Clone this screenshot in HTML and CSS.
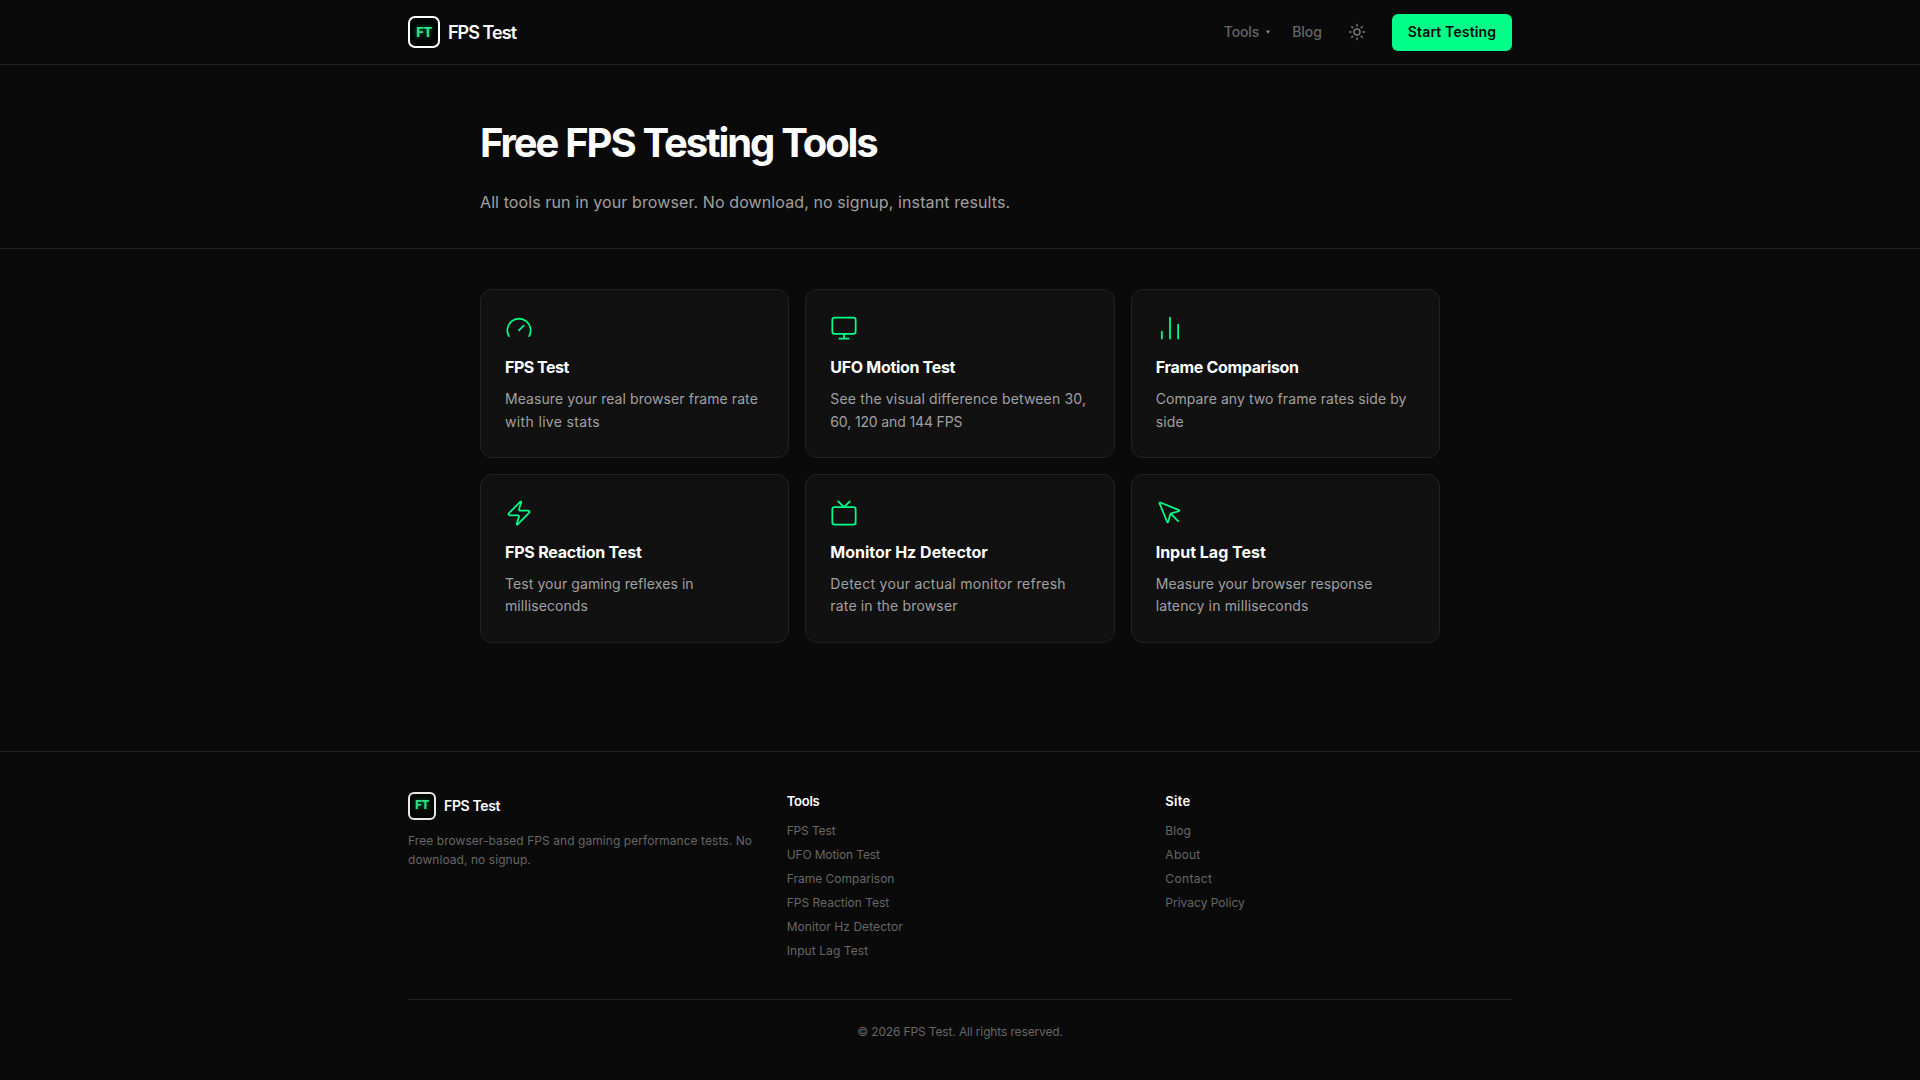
FILE: index.html
```html
<!DOCTYPE html>
<html lang="en">
<head>
<meta charset="utf-8">
<title>Free FPS Testing Tools</title>
<link rel="stylesheet" href="styles.css">
</head>
<body>
<header class="site-header">
  <div class="wrap header-row">
    <a class="brand"><span class="logo">FT</span><span class="brand-name">FPS Test</span></a>
    <nav class="nav">
      <a class="nav-tools"><span class="tight-1">Tools</span><svg class="caret" viewBox="0 0 4 4"><path d="M0 .4h4L2 4z"/></svg></a>
      <a class="nav-blog">Blog</a>
      <svg class="sun" viewBox="0 0 24 24"><circle cx="12" cy="12" r="4"/><path d="M12 2v2M12 20v2M4.93 4.93l1.41 1.41M17.66 17.66l1.41 1.41M2 12h2M20 12h2M6.34 17.66l-1.41 1.41M19.07 4.93l-1.41 1.41"/></svg>
      <a class="cta">Start Testing</a>
    </nav>
  </div>
</header>
<section class="hero">
  <div class="narrow">
    <h1>Free FPS Testing Tools</h1>
    <p class="lead">All tools run in your browser. No download, no signup, instant results.</p>
  </div>
</section>
<main class="narrow tools">
  <a class="card">
    <svg class="icon" viewBox="0 0 24 24"><path d="M12 14l4-4M3.34 19a10 10 0 1 1 17.32 0"/></svg>
    <h2 class="tight-4">FPS Test</h2>
    <p><span class="wide-1">Measure your real browser frame rate</span><br><span class="wide-4">with live stats</span></p>
  </a>
  <a class="card">
    <svg class="icon" viewBox="0 0 24 24"><rect x="2" y="3" width="20" height="14" rx="2"/><path d="M8 21h8M12 17v4"/></svg>
    <h2 class="tight-3">UFO Motion Test</h2>
    <p><span class="wide-2">See the visual difference between 30,</span><br><span class="tight-1">60, 120 and 144 FPS</span></p>
  </a>
  <a class="card">
    <svg class="icon" viewBox="0 0 24 24"><path d="M5 21v-6M12 21V3M19 21V9"/></svg>
    <h2 class="tight-3">Frame Comparison</h2>
    <p><span class="wide-1">Compare any two frame rates side by</span><br><span class="wide-2">side</span></p>
  </a>
  <a class="card">
    <svg class="icon" viewBox="0 0 24 24"><path d="M4 14a1 1 0 0 1-.78-1.63l9.9-10.2a.5.5 0 0 1 .86.46l-1.92 6.02A1 1 0 0 0 13 10h7a1 1 0 0 1 .78 1.63l-9.9 10.2a.5.5 0 0 1-.86-.46l1.92-6.02A1 1 0 0 0 11 14z"/></svg>
    <h2 class="tight-2">FPS Reaction Test</h2>
    <p><span class="wide-1">Test your gaming reflexes in</span><br><span class="wide-1">milliseconds</span></p>
  </a>
  <a class="card">
    <svg class="icon" viewBox="0 0 24 24"><rect x="2" y="7" width="20" height="15" rx="2"/><path d="M17 2l-5 5-5-5"/></svg>
    <h2>Monitor Hz Detector</h2>
    <p><span class="wide-3">Detect your actual monitor refresh</span><br><span class="wide-2">rate in the browser</span></p>
  </a>
  <a class="card">
    <svg class="icon" viewBox="0 0 24 24"><path d="M12.586 12.586L19 19M3.688 3.037a.497.497 0 0 0-.651.651l6.5 15.999a.501.501 0 0 0 .947-.062l1.569-6.083a2 2 0 0 1 1.448-1.479l6.124-1.579a.5.5 0 0 0 .063-.947z"/></svg>
    <h2>Input Lag Test</h2>
    <p><span class="wide-1">Measure your browser response</span><br><span class="wide-2">latency in milliseconds</span></p>
  </a>
</main>
<footer class="site-footer">
  <div class="wrap">
    <div class="footer-grid">
      <div class="about">
        <a class="brand small"><span class="logo">FT</span><span class="brand-name">FPS Test</span></a>
        <p>Free browser-based FPS and gaming performance tests. No<br>download, no signup.</p>
      </div>
      <div>
        <h3 class="tight-2">Tools</h3>
        <ul>
          <li><a class="tight-1">FPS Test</a></li>
          <li><a class="tight-1">UFO Motion Test</a></li>
          <li><a>Frame Comparison</a></li>
          <li><a>FPS Reaction Test</a></li>
          <li><a class="wide-1">Monitor Hz Detector</a></li>
          <li><a class="wide-1">Input Lag Test</a></li>
        </ul>
      </div>
      <div>
        <h3 class="wide-3">Site</h3>
        <ul>
          <li><a class="wide-1">Blog</a></li>
          <li><a class="wide-3">About</a></li>
          <li><a class="wide-4">Contact</a></li>
          <li><a>Privacy Policy</a></li>
        </ul>
      </div>
    </div>
    <p class="copyright"><span class="tight-1">© 2026 FPS Test. All rights reserved.</span></p>
  </div>
</footer>
</body>
</html>
```
FILE: styles.css
```css
* { box-sizing: border-box; margin: 0; padding: 0; }
body { background: #0a0a0a; color: #fff; font-family: Inter, sans-serif; font-size: 16px; line-height: 1.6; min-height: 1080px; }
.wrap { width: 1104px; margin: 0 auto; }
.narrow { width: 960px; margin: 0 auto; }

/* tracking steps */
.tight-1 { letter-spacing: -0.14px; }
.tight-2 { letter-spacing: -0.22px; }
.tight-3 { letter-spacing: -0.31px; }
.tight-4 { letter-spacing: -0.5px; }
.wide-1 { letter-spacing: 0.08px; }
.wide-2 { letter-spacing: 0.16px; }
.wide-3 { letter-spacing: 0.27px; }
.wide-4 { letter-spacing: 0.35px; }

.site-header { height: 65px; border-bottom: 1px solid #222; }
.header-row { height: 64px; display: flex; justify-content: space-between; align-items: center; }
.brand { display: flex; align-items: center; gap: 8px; font-size: 18px; font-weight: 600; }
.brand-name { letter-spacing: -0.97px; padding-top: 2px; }
.logo { width: 32px; height: 32px; display: flex; align-items: center; justify-content: center; border: 2px solid #fff; border-radius: 7px; background: #020604; color: #2be08a; font-size: 13px; font-weight: 800; letter-spacing: -0.5px; line-height: 1; text-shadow: 0 0 4px #00ff8866; }
.nav { display: flex; align-items: center; font-size: 14px; font-weight: 500; color: #666; }
.nav-tools { display: flex; align-items: center; gap: 7px; margin-right: 22px; padding-top: 1px; }
.caret { width: 4px; height: 4px; fill: #888; }
.nav-blog { margin-right: 26px; padding-top: 1px; }
.sun { width: 18px; height: 18px; margin-right: 26px; fill: none; stroke: #777; stroke-width: 2; stroke-linecap: round; }
.cta { width: 120px; height: 37px; display: flex; align-items: center; justify-content: center; background: #00ff88; color: #0a0a0a; border-radius: 6px; font-weight: 600; letter-spacing: 0.15px; padding-top: 1px; }

.hero { height: 184px; padding-top: 48px; border-bottom: 1px solid #222; }
h1 { font-size: 40px; line-height: 59px; font-weight: 700; letter-spacing: -2.1px; word-spacing: 0.6px; }
.lead { margin-top: 17px; color: #a0a0a0; line-height: 26px; letter-spacing: 0.1px; }

.tools { padding-top: 40px; display: grid; grid-template-columns: repeat(3, 1fr); gap: 16px; }
.card { height: 168.8px; padding: 24px; background: #111; border: 1px solid #222; border-radius: 12px; }
.icon { display: block; width: 28px; height: 28px; margin-bottom: 13px; fill: none; stroke: #00ff88; stroke-width: 1.5; stroke-linecap: round; stroke-linejoin: round; }
.card h2 { font-size: 16px; line-height: 25.6px; font-weight: 700; margin-bottom: 7.6px; }
.card p { color: #a0a0a0; font-size: 14px; line-height: 22.4px; white-space: nowrap; }

.site-footer { margin-top: 108px; padding-top: 40px; border-top: 1px solid #222; color: #666; font-size: 12px; }
.footer-grid { display: grid; grid-template-columns: repeat(3, 1fr); gap: 32px; height: 207px; }
.small { color: #fff; font-size: 14px; }
.small .brand-name { letter-spacing: -0.35px; }
.small .logo { width: 28px; height: 28px; border-width: 2px; border-color: #e8e8e8; border-radius: 6px; font-size: 11.5px; padding-top: 1px; }
.about p { margin-top: 11px; line-height: 19.2px; white-space: nowrap; letter-spacing: 0.06px; }
h3 { color: #fff; font-size: 13px; line-height: 20px; font-weight: 600; margin: -1px 0 8px; }
ul { list-style: none; }
li { line-height: 24px; }
.copyright { border-top: 1px solid #222; padding-top: 22px; text-align: center; line-height: 19px; }
```
